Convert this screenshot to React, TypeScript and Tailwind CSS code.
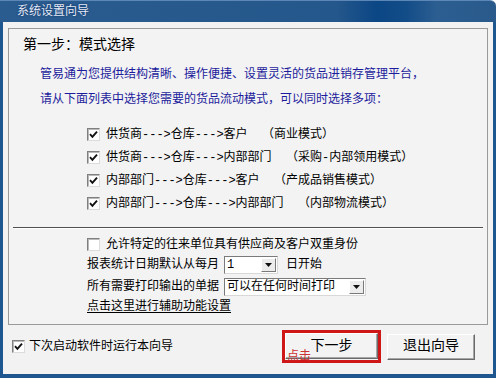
import React from 'react'

function CheckBox({ checked }: { checked?: boolean }) {
  return (
    <span className="w-[13px] h-[13px] shrink-0 bg-white border border-t-[#7f7f7f] border-l-[#7f7f7f] border-r-[#dcdcdc] border-b-[#dcdcdc] shadow-[inset_1px_1px_0_#b9b9b9] flex items-center justify-center">
      {checked && (
        <svg width="9" height="9" viewBox="0 0 9 9">
          <path d="M1 4.2 L3.4 6.8 L8 1.6" fill="none" stroke="#111" strokeWidth="1.9" />
        </svg>
      )}
    </span>
  )
}

function Combo({ value, width }: { value: string; width: string }) {
  return (
    <div className={`${width} h-[18px] bg-white border border-t-[#7a7a7a] border-l-[#7a7a7a] border-r-[#d8d8d8] border-b-[#d8d8d8] flex items-center justify-between pl-[2px] pr-px`}>
      <span className="leading-[14px]">{value}</span>
      <span className="w-[15px] h-[14px] bg-[#ececec] border border-t-white border-l-white border-r-[#7a7a7a] border-b-[#7a7a7a] flex items-center justify-center">
        <svg width="7" height="4" viewBox="0 0 7 4">
          <path d="M0 0 H7 L3.5 4 Z" fill="#111" />
        </svg>
      </span>
    </div>
  )
}

const modes = [
  ['供货商--->仓库--->客户', '（商业模式）'],
  ['供货商--->仓库--->内部部门', '（采购-内部领用模式）'],
  ['内部部门--->仓库--->客户', '（产成品销售模式）'],
  ['内部部门--->仓库--->内部部门', '（内部物流模式）'],
]

const btn =
  'h-[26px] bg-[#f3f3f3] border border-t-white border-l-white border-r-[#6a6a6a] border-b-[#6a6a6a] shadow-[inset_-1px_-1px_0_#a6a6a6] text-[14px] text-black flex items-center justify-center'

export default function App() {
  return (
    <div className="w-[496px] h-[378px] flex flex-col text-[12px] text-black font-['Liberation_Mono','Noto_Sans_CJK_SC',monospace]">
      {/* title bar */}
      <div className="h-[22px] shrink-0 rounded-tr-[6px] bg-[linear-gradient(90deg,#2b5c8f_0%,#24578b_68%,#0b4685_76%,#134d88_82%,#2c5e91_88%,#2a5a8c_100%)] border-t border-[#5b86b5] flex items-center pl-[17px]">
        <span className="text-[#e4eaf7] [text-shadow:0_0_2px_#0a2a60]">系统设置向导</span>
      </div>

      {/* body */}
      <div className="flex-1 flex flex-col bg-[#f2f2f2] border-l-[3px] border-r-[3px] border-b-[4px] border-[#1e5790]">
        {/* panel */}
        <div className="mx-[5px] mt-[6px] h-[297px] border border-[#9a9a9a] bg-[#f3f3f3] flex flex-col">
          <div className="pl-[14px] pt-[6px] text-[14px] leading-[20px]">第一步：模式选择</div>

          <div className="pl-[31px] mt-[8px] text-[#1c1c9c] leading-[25px]">
            <div>管易通为您提供结构清晰、操作便捷、设置灵活的货品进销存管理平台，</div>
            <div>请从下面列表中选择您需要的货品流动模式，可以同时选择多项：</div>
          </div>

          <div className="mt-[10px] pl-[78px] flex flex-col">
            {modes.map(([path, name]) => (
              <div key={path} className="h-[23px] flex items-center gap-[6px]">
                <CheckBox checked />
                <span className="whitespace-pre">{path}  {name}</span>
              </div>
            ))}
          </div>

          <div className="mt-[12px] mx-[4px] h-px bg-[#505050]" />
          <div className="mx-[4px] h-px bg-white" />

          <div className="pl-[78px] mt-[5px] flex flex-col">
            <div className="h-[21px] flex items-center gap-[6px]">
              <CheckBox />
              <span>允许特定的往来单位具有供应商及客户双重身份</span>
            </div>
            <div className="h-[20px] flex items-center">
              <span>报表统计日期默认从每月</span>
              <div className="ml-[5px]">
                <Combo value="1" width="w-[54px]" />
              </div>
              <span className="ml-[8px]">日开始</span>
            </div>
            <div className="h-[20px] mt-[2px] flex items-center">
              <span>所有需要打印输出的单据</span>
              <div className="ml-[5px]">
                <Combo value="可以在任何时间打印" width="w-[142px]" />
              </div>
            </div>
            <div className="h-[20px] flex items-center">
              <span className="underline underline-offset-2">点击这里进行辅助功能设置</span>
            </div>
          </div>
        </div>

        {/* bottom row */}
        <div className="mt-[5px] h-[33px] flex items-center pl-[9px] pr-[18px]">
          <div className="flex items-center gap-[4px]">
            <CheckBox checked />
            <span>下次启动软件时运行本向导</span>
          </div>
          <div className="flex-1" />
          <div className="relative w-[99px] h-[33px] border-[3px] border-[#cf1717]">
            <div className={`${btn} w-full`}>下一步</div>
            <span className="absolute left-[2px] top-[18px] leading-[12px] text-[#cc3232]">点击</span>
          </div>
          <div className={`${btn} w-[88px] ml-[6px]`}>退出向导</div>
        </div>
      </div>
    </div>
  )
}
